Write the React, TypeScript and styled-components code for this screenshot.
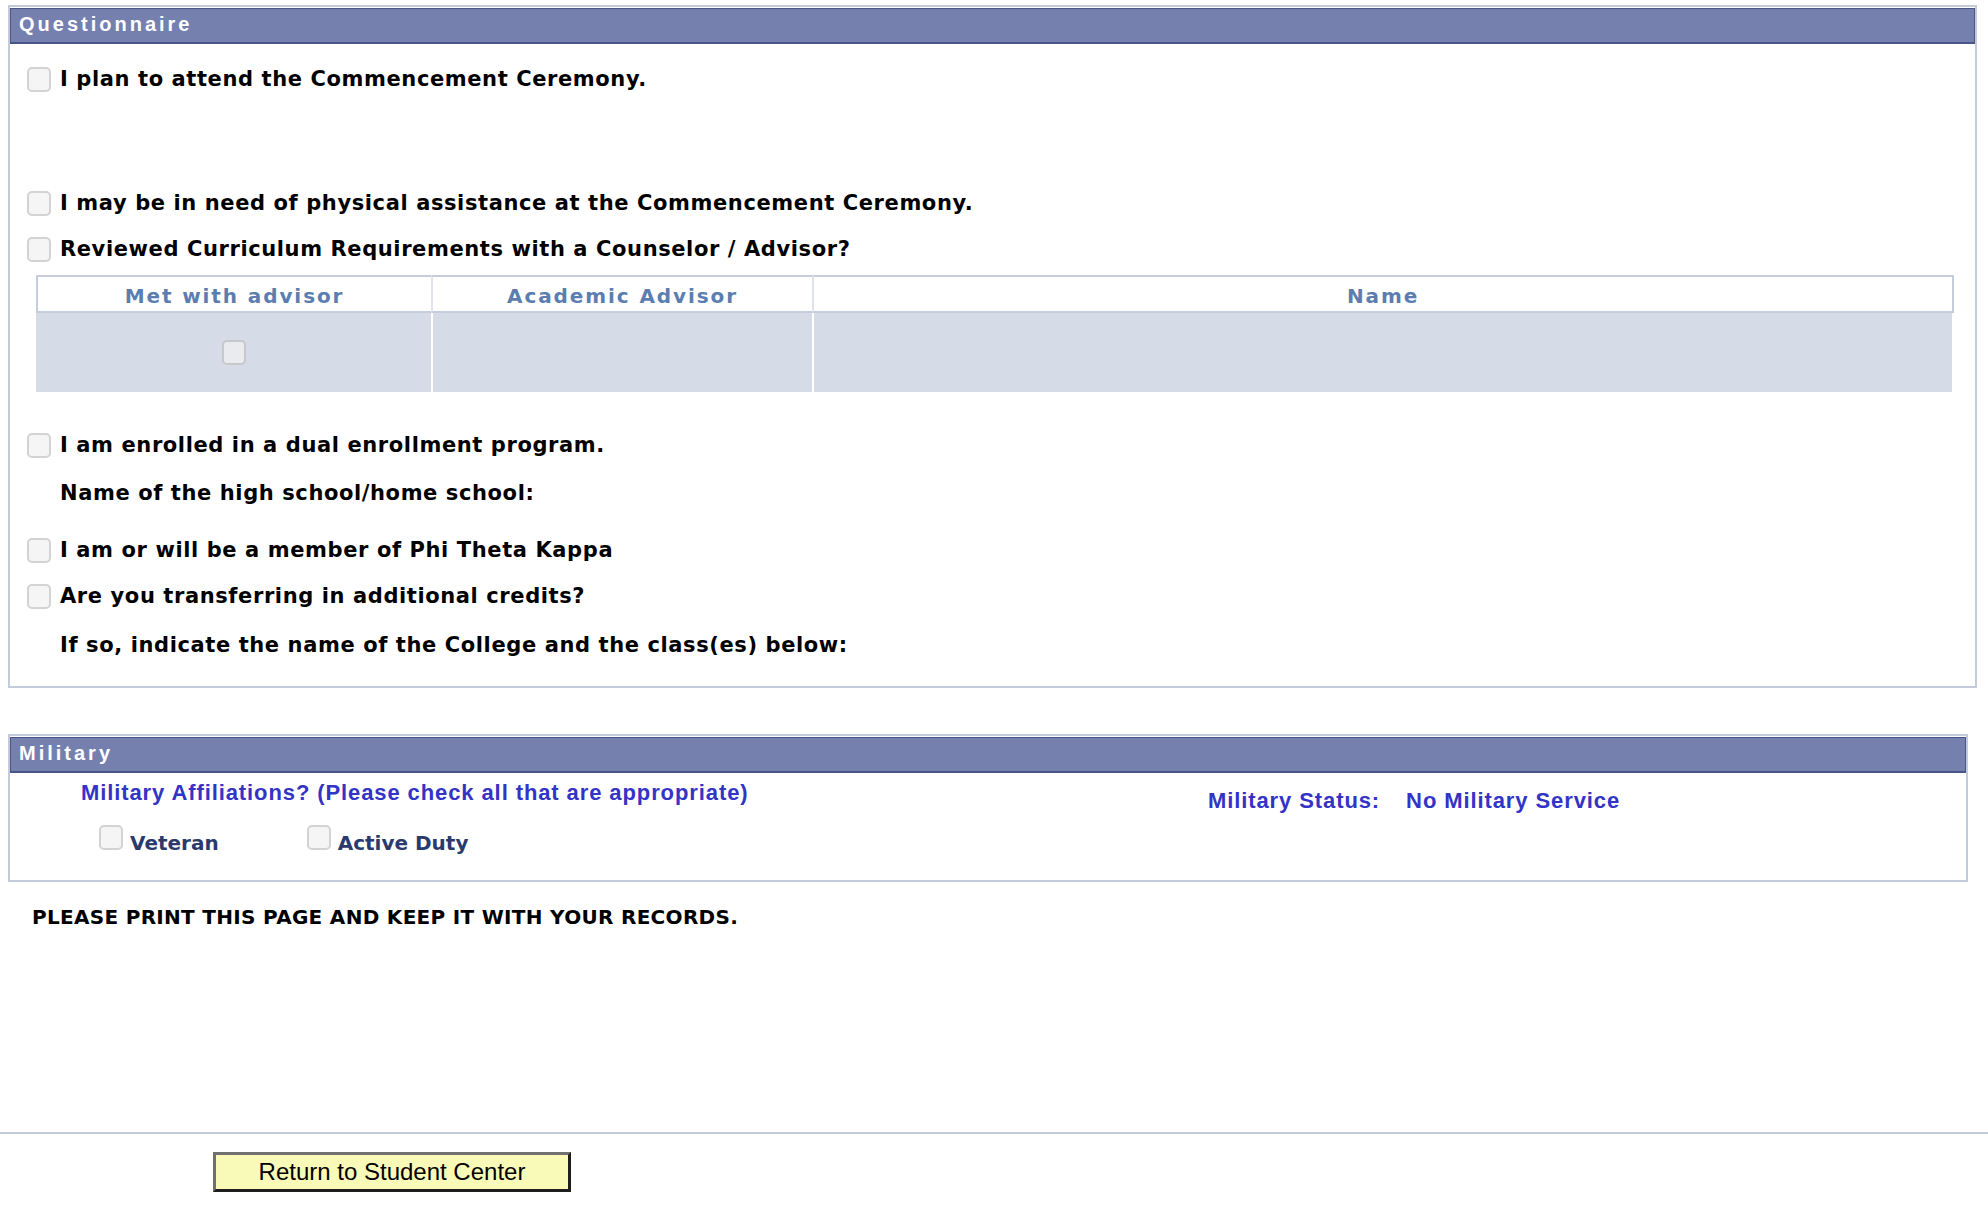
import React from 'react'
import styled, { createGlobalStyle } from 'styled-components'

const GlobalStyle = createGlobalStyle`
  html, body {
    margin: 0;
    padding: 0;
    background: #ffffff;
  }
  body {
    font-family: "DejaVu Sans", Verdana, sans-serif;
    color: #000000;
  }
`

const Page = styled.div`
  width: 1988px;
  min-height: 1206px;
  padding-top: 5px;
  box-sizing: border-box;
`

const Content = styled.div`
  padding-left: 8px;
`

const Section = styled.div<{ $width: number }>`
  width: ${(p) => p.$width}px;
  box-sizing: border-box;
  border: 2px solid #c3cad9;
  background: #ffffff;
`

const SectionHeader = styled.div`
  height: 36px;
  box-sizing: border-box;
  margin: 1px 0 0 0;
  border: 1px solid #4b5688;
  border-bottom-width: 2px;
  background: #7680af;
  color: #ffffff;
  font-family: "Liberation Sans", Arial, sans-serif;
  font-weight: bold;
  font-size: 20px;
  letter-spacing: 3px;
  line-height: 30px;
  padding-left: 8px;
`

const QuestionBody = styled.div`
  display: flex;
  flex-direction: column;
  padding: 0 21px 18px 17px;
`

const Row = styled.div<{ $gap?: number; $indent?: boolean }>`
  display: flex;
  align-items: center;
  gap: 9px;
  height: 46px;
  margin-top: ${(p) => p.$gap || 0}px;
  padding-left: ${(p) => (p.$indent ? 33 : 0)}px;
`

const Label = styled.span`
  font-family: "DejaVu Sans", Verdana, sans-serif;
  font-weight: bold;
  font-size: 21px;
  letter-spacing: 0.6px;
  color: #000000;
  white-space: nowrap;
`

const Box = styled.input.attrs({ type: 'checkbox' })<{ $tone?: 'grid' }>`
  appearance: none;
  -webkit-appearance: none;
  margin: 0;
  width: 24px;
  height: 25px;
  flex: none;
  box-sizing: border-box;
  border: 2px solid ${(p) => (p.$tone === 'grid' ? '#c6c8cc' : '#d3d3d3')};
  border-radius: 5px;
  background: ${(p) => (p.$tone === 'grid' ? '#e9ebef' : '#f5f5f5')};
`

const AdvisorGrid = styled.div`
  display: grid;
  grid-template-columns: 395px 381px 1fr;
  margin: 3px 0 0 9px;
`

const HeadCell = styled.div<{ $first?: boolean; $last?: boolean }>`
  height: 38px;
  box-sizing: border-box;
  padding-top: 3px;
  border-top: 2px solid #c5ccdb;
  border-bottom: 2px solid #c5ccdb;
  border-left: 2px solid ${(p) => (p.$first ? '#c5ccdb' : '#dfe3eb')};
  border-right: ${(p) => (p.$last ? '2px solid #c5ccdb' : 'none')};
  display: flex;
  align-items: center;
  justify-content: center;
  font-family: "DejaVu Sans", Verdana, sans-serif;
  font-weight: bold;
  font-size: 20px;
  letter-spacing: 1.9px;
  color: #5b7db0;
`

const DataCell = styled.div<{ $first?: boolean; $last?: boolean }>`
  height: 79px;
  background: #d5dbe7;
  border-left: ${(p) => (p.$first ? 'none' : '2px solid #ffffff')};
  margin-right: ${(p) => (p.$last ? 2 : 0)}px;
  display: flex;
  align-items: center;
  justify-content: center;
`

const Gap = styled.div<{ $h: number }>`
  height: ${(p) => p.$h}px;
`

const MilitaryBody = styled.div`
  display: flex;
  padding-bottom: 25px;
`

const LeftCol = styled.div`
  width: 1198px;
  padding-left: 71px;
  box-sizing: border-box;
`

const RightCol = styled.div`
  display: flex;
  gap: 26px;
  margin-top: 13px;
  height: 30px;
`

const BlueText = styled.span`
  font-family: "Liberation Sans", Arial, sans-serif;
  font-weight: bold;
  font-size: 22px;
  letter-spacing: 0.9px;
  line-height: 30px;
  color: #3333c6;
  white-space: nowrap;
`

const AffTitle = styled(BlueText)`
  display: block;
  margin-top: 5px;
`

const Options = styled.div`
  display: flex;
  gap: 88px;
  margin-top: 17px;
  padding-left: 18px;
`

const Option = styled.label`
  display: flex;
  align-items: flex-start;
  gap: 7px;
`

const OptionText = styled.span`
  margin-top: 6px;
  font-family: "DejaVu Sans", Verdana, sans-serif;
  font-weight: bold;
  font-size: 20px;
  line-height: 24px;
  color: #2b3a6c;
`

const Notice = styled.div`
  margin: 20px 0 0 24px;
  font-family: "DejaVu Sans", Verdana, sans-serif;
  font-weight: bold;
  font-size: 20px;
  letter-spacing: 0.3px;
  line-height: 30px;
`

const Footer = styled.div`
  margin-top: 200px;
  border-top: 2px solid #c3cad9;
  padding: 18px 0 0 213px;
`

const ReturnButton = styled.button`
  width: 358px;
  height: 40px;
  box-sizing: border-box;
  background: #fafab8;
  border-style: solid;
  border-width: 3px;
  border-color: #707070 #1e1e1e #1e1e1e #707070;
  font-family: "Liberation Sans", Arial, sans-serif;
  font-size: 24px;
  color: #000000;
  padding: 0;
  cursor: pointer;
`

const App = () => {
  return (
    <Page>
      <GlobalStyle />
      <Content>
        <Section $width={1969}>
          <SectionHeader>Questionnaire</SectionHeader>
          <QuestionBody>
            <Row $gap={12}>
              <Box />
              <Label>I plan to attend the Commencement Ceremony.</Label>
            </Row>
            <Row $gap={78}>
              <Box />
              <Label>I may be in need of physical assistance at the Commencement Ceremony.</Label>
            </Row>
            <Row>
              <Box />
              <Label>Reviewed Curriculum Requirements with a Counselor / Advisor?</Label>
            </Row>
            <AdvisorGrid>
              <HeadCell $first>Met with advisor</HeadCell>
              <HeadCell>Academic Advisor</HeadCell>
              <HeadCell $last>Name</HeadCell>
              <DataCell $first>
                <Box $tone="grid" />
              </DataCell>
              <DataCell />
              <DataCell $last />
            </AdvisorGrid>
            <Row $gap={30}>
              <Box />
              <Label>I am enrolled in a dual enrollment program.</Label>
            </Row>
            <Row $gap={2} $indent>
              <Label>Name of the high school/home school:</Label>
            </Row>
            <Row $gap={11}>
              <Box />
              <Label>I am or will be a member of Phi Theta Kappa</Label>
            </Row>
            <Row>
              <Box />
              <Label>Are you transferring in additional credits?</Label>
            </Row>
            <Row $gap={3} $indent>
              <Label>If so, indicate the name of the College and the class(es) below:</Label>
            </Row>
          </QuestionBody>
        </Section>

        <Gap $h={46} />

        <Section $width={1960}>
          <SectionHeader>Military</SectionHeader>
          <MilitaryBody>
            <LeftCol>
              <AffTitle>Military Affiliations? (Please check all that are appropriate)</AffTitle>
              <Options>
                <Option>
                  <Box />
                  <OptionText>Veteran</OptionText>
                </Option>
                <Option>
                  <Box />
                  <OptionText>Active Duty</OptionText>
                </Option>
              </Options>
            </LeftCol>
            <RightCol>
              <BlueText>Military Status:</BlueText>
              <BlueText>No Military Service</BlueText>
            </RightCol>
          </MilitaryBody>
        </Section>

        <Notice>PLEASE PRINT THIS PAGE AND KEEP IT WITH YOUR RECORDS.</Notice>
      </Content>
      <Footer>
        <ReturnButton>Return to Student Center</ReturnButton>
      </Footer>
    </Page>
  )
}

export default App
